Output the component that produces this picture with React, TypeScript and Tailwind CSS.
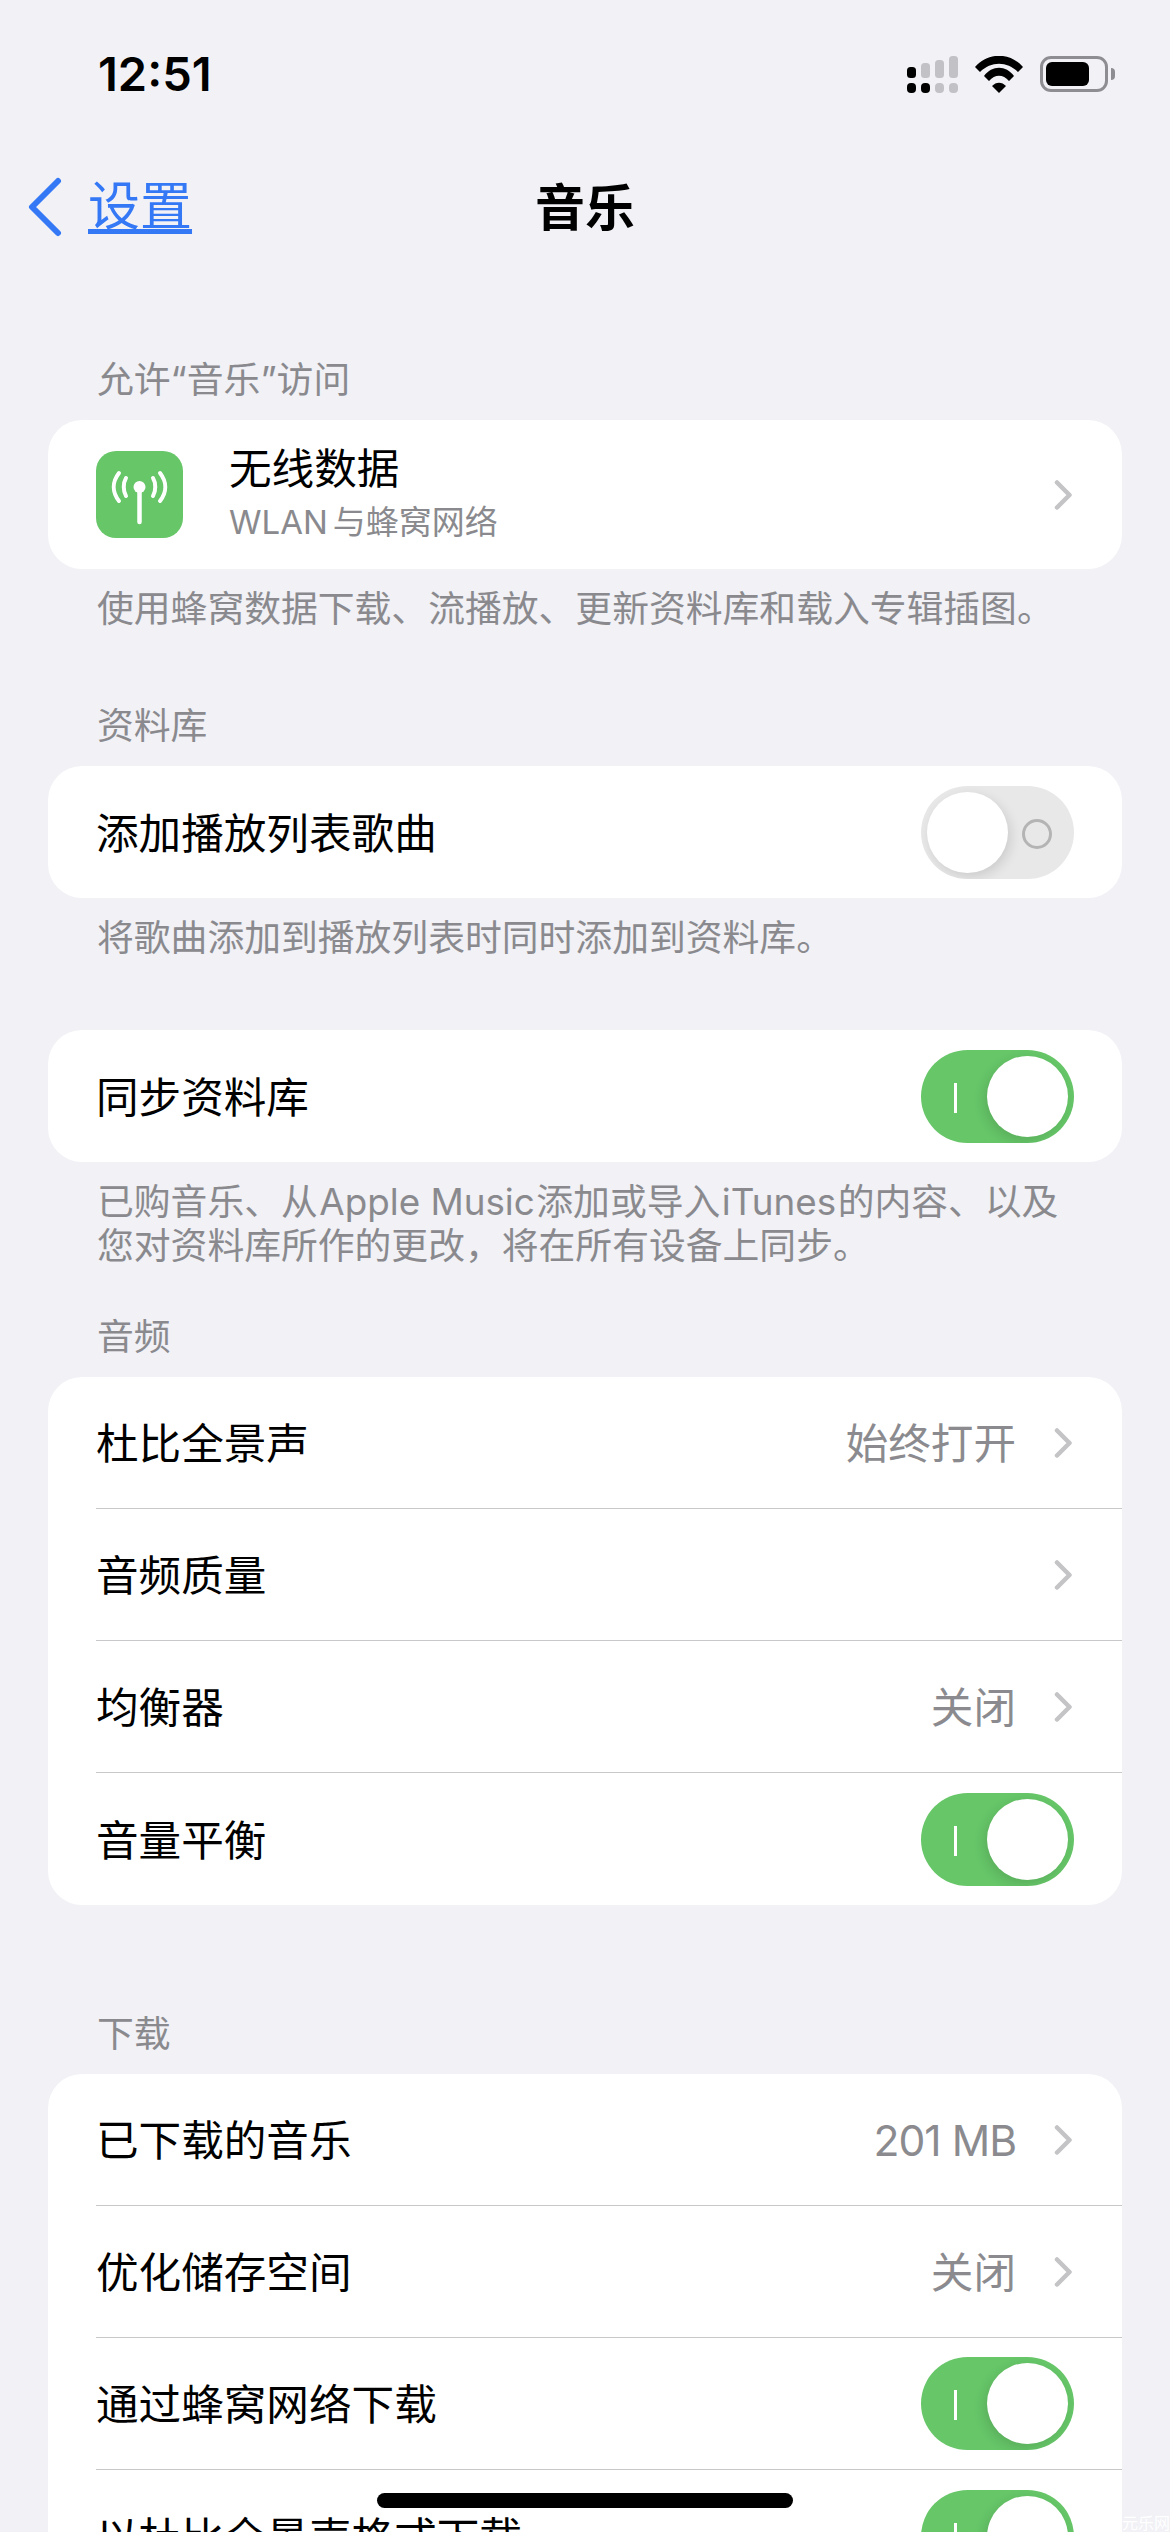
function Chevron() {
  return (
    <svg width="20" height="30" viewBox="0 0 20 30" fill="none" className="shrink-0">
      <path d="M3 2.5L15.5 15L3 27.5" stroke="#c4c4c7" strokeWidth="4.5" strokeLinecap="round" strokeLinejoin="round" />
    </svg>
  );
}

function Toggle({ on }: { on: boolean }) {
  if (on) {
    return (
      <div className="relative h-[93px] w-[153px] shrink-0 overflow-hidden rounded-full bg-[#66c668]">
        <div className="absolute left-[33px] top-[33px] h-[30px] w-[3px] bg-white" />
        <div className="absolute right-[6px] top-[6px] size-[81px] rounded-full bg-white shadow-[-3px_4px_12px_rgba(0,0,0,0.12)]" />
      </div>
    );
  }
  return (
    <div className="relative h-[93px] w-[153px] shrink-0 overflow-hidden rounded-full bg-[#e8e8e9]">
      <div className="absolute right-[22px] top-[33px] size-[30px] rounded-full border-[3px] border-[#b4b4b4]" />
      <div className="absolute left-[6px] top-[6px] size-[81px] rounded-full bg-white shadow-[3px_4px_12px_rgba(0,0,0,0.12)]" />
    </div>
  );
}

function Row({ label, value, toggle, chevron, last }: { label: string; value?: React.ReactNode; toggle?: boolean; chevron?: boolean; last?: boolean }) {
  return (
    <div className="pl-[48px]">
      <div className={`flex h-[132px] items-center pr-[48px] ${last ? "" : "border-b border-[#c8c8ca]"}`}>
        <span className="flex-1 pt-[3px] text-[42.6px] text-black">{label}</span>
        {value && <span className="mr-[38px] pt-[3px] text-[42.6px] text-[#8b8b8f]">{value}</span>}
        {chevron && <Chevron />}
        {toggle !== undefined && <Toggle on={toggle} />}
      </div>
    </div>
  );
}

function Card({ children }: { children: React.ReactNode }) {
  return <div className="mx-[48px] my-[18px] overflow-hidden rounded-[34px] bg-white">{children}</div>;
}

function Note({ children }: { children: React.ReactNode }) {
  return <div className="px-[97px] text-[36.8px] leading-[44px] text-[#8a8a8e]">{children}</div>;
}

export default function App() {
  return (
    <div className="relative h-[2532px] w-[1170px] overflow-hidden bg-[#f1f1f6] font-['Inter','Noto_Sans_CJK_SC',sans-serif]">
      <div className="flex h-[150px] items-center justify-between pb-[2px] pl-[98px] pr-[55px]">
        <span className="text-[47px] font-semibold text-black">12:51</span>
        <div className="flex items-center gap-[17px]">
          <svg width="51" height="37" viewBox="0 0 51 37">
            <rect x="0" y="11" width="9" height="11" rx="3.5" fill="#000" />
            <rect x="14" y="7" width="9" height="15" rx="3.5" fill="#c2c2c6" />
            <rect x="28" y="4" width="9" height="18" rx="3.5" fill="#c2c2c6" />
            <rect x="42" y="0" width="9" height="22" rx="3.5" fill="#c2c2c6" />
            <rect x="0" y="27" width="9" height="10" rx="4" fill="#000" />
            <rect x="14" y="27" width="9" height="10" rx="4" fill="#000" />
            <rect x="28" y="27" width="9" height="10" rx="4" fill="#c2c2c6" />
            <rect x="42" y="27" width="9" height="10" rx="4" fill="#c2c2c6" />
          </svg>
          <svg width="48" height="37" viewBox="0 0 48 37">
            <path d="M0 11C13 -4 35 -4 48 11L43 16C32 5 16 5 5 16Z" fill="#000" />
            <path d="M9 20C17 9 31 9 39 20L34 25C28 18 20 18 14 25Z" fill="#000" />
            <path d="M17 30C21 25.5 27 25.5 31 30L24 37Z" fill="#000" />
          </svg>
          <div className="flex items-center">
            <div className="h-[36px] w-[68px] rounded-[11px] border-[3px] border-[#8e8e92] p-[3px]">
              <div className="h-full w-[43px] rounded-[6px] bg-black" />
            </div>
            <div className="ml-[3px] h-[12px] w-[4px] rounded-r-full bg-[#8e8e92]" />
          </div>
        </div>
      </div>

      <div className="relative flex h-[116px] items-center justify-center">
        <div className="absolute left-[27px] top-[27px] flex items-center">
          <svg width="36" height="60" viewBox="0 0 36 60" fill="none">
            <path d="M31 4L5 30l26 26" stroke="#3478f6" strokeWidth="6" strokeLinecap="round" strokeLinejoin="round" />
          </svg>
          <span className="ml-[25px] text-[52px] leading-[60px] text-[#3478f6] underline underline-offset-4">设置</span>
        </div>
        <span className="text-[50px] font-semibold text-black">音乐</span>
      </div>

      <div className="mt-[92px]">
        <Note>允许“音乐”访问</Note>
        <Card>
          <div className="flex h-[149px] items-center pl-[48px] pr-[48px]">
            <div className="size-[87px] rounded-[20px] bg-[#66c668]">
              <svg width="87" height="87" viewBox="0 0 87 87" fill="none" stroke="#fff" strokeLinecap="round" strokeWidth="4">
                <path d="M43.5 36V71" strokeWidth="4.5" />
                <circle cx="43.5" cy="36" r="6" fill="#fff" stroke="none" />
                <path d="M30 27C27 32 27 40 30 45M57 27C60 32 60 40 57 45" />
                <path d="M23 22C16 31 16 41 23 50M64 22C71 31 71 41 64 50" />
              </svg>
            </div>
            <div className="ml-[46px] flex-1">
              <div className="text-[42.6px] leading-[50px] text-black">无线数据</div>
              <div className="mt-[5px] text-[33px] leading-[46px] text-[#8a8a8e]">
                WLAN<span className="ml-[5px]">与蜂窝网络</span>
              </div>
            </div>
            <Chevron />
          </div>
        </Card>
        <Note>使用蜂窝数据下载、流播放、更新资料库和载入专辑插图。</Note>
      </div>

      <div className="mt-[73px]">
        <Note>资料库</Note>
        <Card>
          <Row label="添加播放列表歌曲" toggle={false} last />
        </Card>
        <Note>将歌曲添加到播放列表时同时添加到资料库。</Note>
      </div>

      <div className="mt-[70px]">
        <Card>
          <Row label="同步资料库" toggle={true} last />
        </Card>
        <Note>
          已购音乐、从<span className="mx-[1.5px]">Apple Music</span>添加或导入<span className="mx-[1.5px]">iTunes</span>的内容、以及
          <br />
          您对资料库所作的更改，将在所有设备上同步。
        </Note>
      </div>

      <div className="mt-[47px]">
        <Note>音频</Note>
        <Card>
          <Row label="杜比全景声" value="始终打开" chevron />
          <Row label="音频质量" chevron />
          <Row label="均衡器" value="关闭" chevron />
          <Row label="音量平衡" toggle={true} last />
        </Card>
      </div>

      <div className="mt-[107px]">
        <Note>下载</Note>
        <Card>
          <Row label="已下载的音乐" value={<span className="tracking-[-1px]">201 MB</span>} chevron />
          <Row label="优化储存空间" value="关闭" chevron />
          <Row label="通过蜂窝网络下载" toggle={true} />
          <Row label="以杜比全景声格式下载" toggle={true} last />
        </Card>
      </div>

      <div className="absolute bottom-[24px] left-[377px] h-[15px] w-[416px] rounded-full bg-black" />
      <div className="absolute -bottom-[3px] right-0 text-[16px] leading-[24px] text-white">元乐网</div>
    </div>
  );
}
